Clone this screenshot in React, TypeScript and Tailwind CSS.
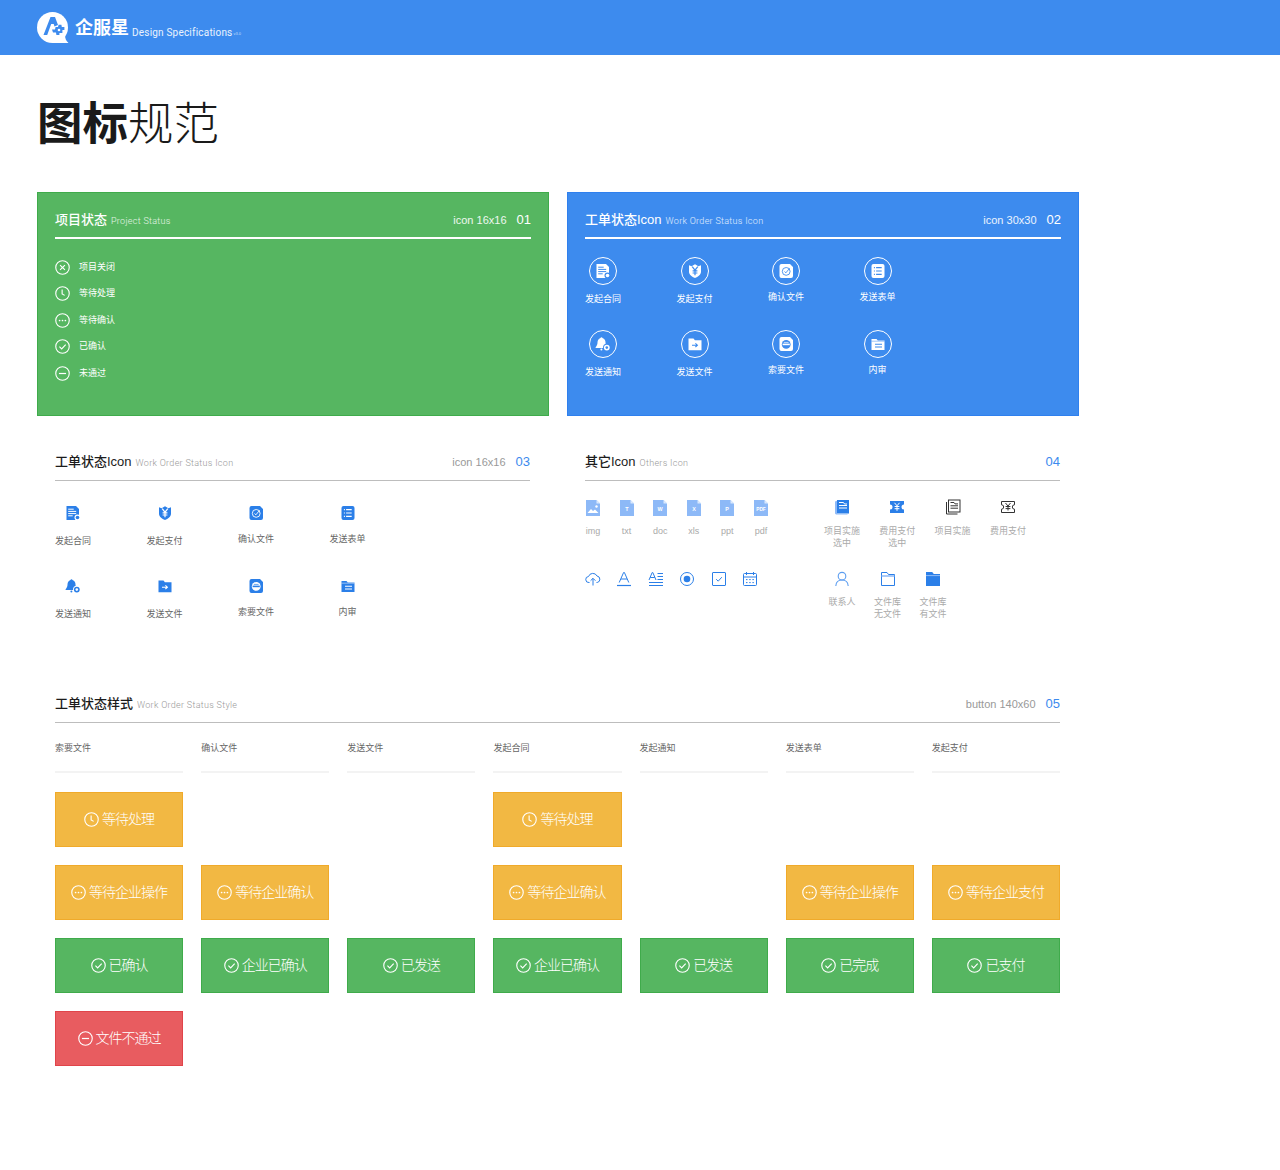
import type { ReactNode } from "react";

const BLUE = "#2b7fe8";
const FONT = "font-['Liberation_Sans','Noto_Sans_CJK_SC',sans-serif]";

type StatusKind = "close" | "clock" | "more" | "check" | "minus";

function StatusGlyph({ kind, className }: { kind: StatusKind; className: string }) {
  return (
    <svg viewBox="0 0 16 16" fill="none" stroke="currentColor" strokeWidth="1.2" className={`shrink-0 ${className}`}>
      <circle cx="8" cy="8" r="7.2" />
      {kind === "close" && <path d="M5.4 5.4l5.2 5.2M10.6 5.4l-5.2 5.2" />}
      {kind === "clock" && <path d="M7.6 3.8v4.6l2.7 1.6" />}
      {kind === "more" && (
        <g fill="currentColor" stroke="none">
          <circle cx="4.9" cy="8" r="0.9" />
          <circle cx="8" cy="8" r="0.9" />
          <circle cx="11.1" cy="8" r="0.9" />
        </g>
      )}
      {kind === "check" && <path d="M4.7 8.2l2.4 2.3 4.3-4.6" />}
      {kind === "minus" && <path d="M4.2 8h7.6" strokeWidth="1.3" />}
    </svg>
  );
}

type OrderKind = "contract" | "pay" | "confirm" | "form" | "notice" | "send" | "request" | "review";

function OrderGlyph({ kind, fg, bg, size = 16 }: { kind: OrderKind; fg: string; bg: string; size?: number }) {
  return (
    <svg viewBox="0 0 16 16" width={size} height={size}>
      {kind === "contract" && (
        <g>
          <path d="M1.5 1h9.500L14 4v11H1.500z" fill={fg} />
          <path d="M3.200 4.200h5.500M3.200 6.400h8M3.200 8.600h8M3.200 10.800h4.500" stroke={bg} strokeWidth="1" />
          <circle cx="12.500" cy="12.500" r="3" fill={bg} />
          <circle cx="12.500" cy="12.500" r="1.800" fill={fg} />
        </g>
      )}
      {kind === "pay" && (
        <g>
          <path d="M2 2.200l2.600 1 3.400-2 3.400 2 2.600-1v6.600c0 3-3 5.200-6 6.200-3-1-6-3.200-6-6.200z" fill={fg} />
          <path d="M5.200 3.600L8 7.200l2.800-3.600M8 7.200v5M5.600 7.800h4.800M5.600 10h4.800" stroke={bg} strokeWidth="1.200" fill="none" />
        </g>
      )}
      {kind === "confirm" && (
        <g>
          <path d="M3.500 1h8.500L15 4v9a2 2 0 0 1-2 2H3.500a2 2 0 0 1-2-2V3a2 2 0 0 1 2-2z" fill={fg} />
          <circle cx="8.200" cy="8.400" r="3.900" fill="none" stroke={bg} strokeWidth="0.900" />
          <path d="M6.500 8.500l1.400 1.300 3.600-4.400" stroke={bg} strokeWidth="0.900" fill="none" />
        </g>
      )}
      {kind === "form" && (
        <g>
          <rect x="1.500" y="1" width="13" height="14" rx="2" fill={fg} />
          <path d="M6.100 4.600h5.600M6.100 8h5.600M6.100 11.400h5.600M3.900 4.600h1M3.900 8h1M3.900 11.400h1" stroke={bg} strokeWidth="1.100" />
        </g>
      )}
      {kind === "notice" && (
        <g>
          <path d="M6.400 1.200c.6 0 1 .4 1.100.9 2 .6 3 2.300 3 4.400 0 2 .7 3.400 1.900 4.800v.7H.6v-.7c1.200-1.400 1.900-2.800 1.900-4.800 0-2.100 1-3.800 3-4.400.1-.5.400-.9.900-.9z" fill={fg} />
          <circle cx="6.400" cy="13.600" r="1" fill={fg} />
          <circle cx="11.800" cy="11.600" r="3.800" fill={bg} />
          <circle cx="11.800" cy="11.600" r="2.900" fill={fg} />
          <circle cx="11.800" cy="11.600" r="1.300" fill={bg} />
        </g>
      )}
      {kind === "send" && (
        <g>
          <path d="M1.500 2.500h5l1.400 1.700h6.600v10h-13z" fill={fg} />
          <path d="M5 9.200h5M8.400 7.400l2 1.800-2 1.800" stroke={bg} strokeWidth="1.100" fill="none" />
        </g>
      )}
      {kind === "request" && (
        <g>
          <path d="M3.500 1h8.500L15 4v9a2 2 0 0 1-2 2H3.500a2 2 0 0 1-2-2V3a2 2 0 0 1 2-2z" fill={fg} />
          <circle cx="8.200" cy="8.400" r="4.400" fill={bg} />
          <path d="M4.600 8.400h7.200" stroke={fg} strokeWidth="1.600" />
          <path d="M5.800 6.400h4.800" stroke={fg} strokeWidth="0.700" />
        </g>
      )}
      {kind === "review" && (
        <g>
          <path d="M1.500 3h5l1.300 1.500h6.700V14h-13z" fill={fg} />
          <path d="M1.500 5.200h13" stroke={bg} strokeWidth="0.500" />
          <path d="M5 8.200h7M5 11h7" stroke={bg} strokeWidth="1.100" />
        </g>
      )}
    </svg>
  );
}

const orderItems: { kind: OrderKind; label: string; low?: boolean }[] = [
  { kind: "contract", label: "发起合同", low: true },
  { kind: "pay", label: "发起支付", low: true },
  { kind: "confirm", label: "确认文件" },
  { kind: "form", label: "发送表单" },
  { kind: "notice", label: "发送通知", low: true },
  { kind: "send", label: "发送文件", low: true },
  { kind: "request", label: "索要文件" },
  { kind: "review", label: "内审" },
];

type HeadingProps = {
  title: string;
  sub: string;
  size?: string;
  no: string;
  light?: boolean;
  boxClass?: string;
};

function Heading({ title, sub, size, no, light, boxClass = "h-[29px] leading-[22px]" }: HeadingProps) {
  return (
    <div>
      <div className={`flex justify-between ${boxClass}`}>
        <div className="flex items-baseline">
          <span className={`text-[13px] font-medium ${light ? "text-white" : "text-[#1c1c1c]"}`}>{title}</span>
          <span className={`ml-1 font-['Roboto'] text-[9px] font-light tracking-[0.3px] ${light ? "text-white/85" : "text-[#999999]"}`}>{sub}</span>
        </div>
        <div className="flex items-baseline">
          {size && <span className={`text-[11px] ${light ? "text-white/90" : "text-[#999999]"}`}>{size}</span>}
          <span className={`ml-[10px] text-[13px] ${light ? "text-white" : "text-[#3c8aee]"}`}>{no}</span>
        </div>
      </div>
      {light ? (
        <div className="h-[2px] w-full bg-white" />
      ) : (
        <div className="h-px w-full bg-[#bdbdbd]" />
      )}
    </div>
  );
}

function ProjectCard() {
  const rows: { kind: StatusKind; label: string }[] = [
    { kind: "close", label: "项目关闭" },
    { kind: "clock", label: "等待处理" },
    { kind: "more", label: "等待确认" },
    { kind: "check", label: "已确认" },
    { kind: "minus", label: "未通过" },
  ];
  return (
    <div className="h-[224px] w-[512px] border border-[#3fab4b] bg-[#56b661] px-[17px] pt-[16px]">
      <Heading title="项目状态" sub="Project Status" size="icon 16x16" no="01" light boxClass="h-[28px] leading-[21px]" />
      <div className="mt-[15px] flex flex-col">
        {rows.map((r) => (
          <div key={r.label} className="flex h-[26.5px] items-center gap-[9px] text-[9px] text-white">
            <StatusGlyph kind={r.kind} className="h-[15px] w-[15px]" />
            {r.label}
          </div>
        ))}
      </div>
    </div>
  );
}

function WorkOrderCard() {
  return (
    <div className="h-[224px] w-[512px] border border-[#2f80ee] bg-[#3d8bee] px-[17px] pt-[16px]">
      <Heading title="工单状态Icon" sub="Work Order Status Icon" size="icon 30x30" no="02" light boxClass="h-[28px] leading-[21px]" />
      <div className="mt-[18px] grid w-[366px] grid-cols-4">
        {orderItems.map((it) => (
          <div key={it.label} className="flex h-[73px] w-[36px] flex-col items-center text-[9px] text-white">
            <div className="flex h-[28px] w-[28px] shrink-0 items-center justify-center rounded-full border border-white">
              <OrderGlyph kind={it.kind} fg="#ffffff" bg="#3d8bee" />
            </div>
            <span className={`whitespace-nowrap leading-[12px] ${it.low ? "mt-[8px]" : "mt-[6px]"}`}>{it.label}</span>
          </div>
        ))}
      </div>
    </div>
  );
}

function WorkOrderPlain() {
  return (
    <div className="w-[475px]">
      <Heading title="工单状态Icon" sub="Work Order Status Icon" size="icon 16x16" no="03" />
      <div className="mt-[24px] grid w-[366px] grid-cols-4">
        {orderItems.map((it) => (
          <div key={it.label} className="flex h-[73px] w-[36px] flex-col items-center text-[9px] text-[#666666]">
            <OrderGlyph kind={it.kind} fg={BLUE} bg="#ffffff" />
            <span className={`whitespace-nowrap leading-[12px] ${it.low ? "mt-[14px]" : "mt-[12px]"}`}>{it.label}</span>
          </div>
        ))}
      </div>
    </div>
  );
}

function FileGlyph({ label }: { label: string }) {
  return (
    <svg viewBox="0 0 16 18" width="16" height="18">
      <path d="M1 1h10.500L15 4.500V17H1z" fill="#8db9f7" />
      <path d="M11.500 1L15 4.500h-3.500z" fill="#dbe9fd" />
      {label === "img" ? (
        <g fill="#ffffff">
          <path d="M2.500 14l3.500-4 2 2 2-1.500 3.500 3.500z" />
          <circle cx="11.500" cy="7.500" r="1.200" />
        </g>
      ) : (
        <text
          x="8"
          y="11.600"
          textAnchor="middle"
          fill="#ffffff"
          fontWeight="700"
          fontSize={label === "PDF" ? "4.800" : "5.400"}
          fontFamily="Liberation Sans"
        >
          {label}
        </text>
      )}
    </svg>
  );
}

function Outline({ children, w = 16 }: { children: ReactNode; w?: number }) {
  return (
    <svg viewBox="0 0 16 16" width={w} height={16} fill="none" stroke={BLUE} strokeWidth="1">
      {children}
    </svg>
  );
}

const files = [
  { mark: "img", label: "img" },
  { mark: "T", label: "txt" },
  { mark: "W", label: "doc" },
  { mark: "X", label: "xls" },
  { mark: "P", label: "ppt" },
  { mark: "PDF", label: "pdf" },
];

function OthersSection() {
  return (
    <div className="w-[475px]">
      <Heading title="其它Icon" sub="Others Icon" no="04" />
      <div className="mt-[18px] flex">
        <div className="w-[239px]">
          <div className="flex h-[72px] gap-[17.6px]">
            {files.map((f) => (
              <div key={f.label} className="flex w-4 flex-col items-center text-[9px] leading-[12px] text-[#aaaaaa]">
                <FileGlyph label={f.mark} />
                <span className="mt-[8px]">{f.label}</span>
              </div>
            ))}
          </div>
          <div className="flex h-4 w-[173px] items-center justify-between">
            <Outline>
              <path d="M4.500 11.500H4a3 3 0 0 1-.5-6A4.600 4.600 0 0 1 12 5a3.300 3.300 0 0 1 .2 6.500h-.7" />
              <path d="M8 14.500V7.500M5.600 9.700L8 7.300l2.400 2.400" />
            </Outline>
            <Outline>
              <path d="M3.200 11.500L7.600 1.500h.8l4.400 10M5 8h6" />
              <path d="M1 14.500h14" strokeWidth="1.200" />
            </Outline>
            <Outline>
              <path d="M1 9L4.200 1.500h.6L8 9M2.200 6.500h4.600" />
              <path d="M9.500 2.500H15M9.500 5.500H15M9.500 8.500H15M1 11.500h14M1 14.500h14" />
            </Outline>
            <Outline>
              <circle cx="8" cy="8" r="6.500" />
              <circle cx="8" cy="8" r="3.300" fill={BLUE} stroke="none" />
            </Outline>
            <Outline>
              <rect x="1.500" y="1.500" width="13" height="13" rx="0.500" />
              <path d="M5.200 8.200l2 2 3.600-4" />
            </Outline>
            <Outline>
              <rect x="1.500" y="2.500" width="13" height="12" rx="1" />
              <path d="M1.500 6h13M4.500 1v3M11.500 1v3M4 8.600h1.500M7.200 8.600h1.500M10.400 8.600h1.500M4 11.600h1.500M7.200 11.600h1.500M10.400 11.600h1.500" />
            </Outline>
          </div>
        </div>
        <div className="text-center text-[9px] leading-[12px] text-[#aaaaaa]">
          <div className="flex h-[72px] gap-[19.3px]">
            <div className="w-9">
              <svg viewBox="0 0 16 16" width="16" height="16" className="mx-auto">
                <path d="M1 2.500L3 1.700V15h10.500v.5H2L1 14.500z" fill="#8db9f7" />
                <rect x="3" y="1" width="12" height="13.500" fill={BLUE} />
                <path d="M5 3.500h4.500l1 1.500h2.500M5 6.500h8M5 9h8" stroke="#ffffff" strokeWidth="1" fill="none" />
              </svg>
              <div className="mt-[10px]">项目实施<br />选中</div>
            </div>
            <div className="w-9">
              <svg viewBox="0 0 16 16" width="16" height="16" className="mx-auto">
                <path d="M1 2h14v3.500a2.500 2.500 0 0 0 0 5V14H1v-3.500a2.500 2.500 0 0 0 0-5z" fill={BLUE} />
                <path d="M5.500 3.800L8 6.800l2.500-3M8 6.800v5M5.600 7.500h4.800M5.600 9.700h4.800" stroke="#ffffff" strokeWidth="1" fill="none" />
              </svg>
              <div className="mt-[10px]">费用支付<br />选中</div>
            </div>
            <div className="w-9">
              <svg viewBox="0 0 16 16" width="16" height="16" fill="none" stroke="#333333" strokeWidth="1" className="mx-auto">
                <path d="M1.500 3v12h11" />
                <rect x="3.500" y="1" width="11.500" height="12" />
                <path d="M5.500 3.500h3.500l1 1.400h3M5.500 6.800h7.500M5.500 9.200h7.500" />
              </svg>
              <div className="mt-[10px]">项目实施</div>
            </div>
            <div className="w-9">
              <svg viewBox="0 0 16 16" width="16" height="16" fill="none" stroke="#333333" strokeWidth="1" className="mx-auto">
                <path d="M1.500 2.500h13v3.300a2.200 2.200 0 0 0 0 4.400v3.300h-13v-3.300a2.200 2.200 0 0 0 0-4.400z" />
                <path d="M5.500 4L8 7l2.500-3M8 7v4.500M5.600 7.500h4.800M5.600 9.600h4.800" />
              </svg>
              <div className="mt-[10px]">费用支付</div>
            </div>
          </div>
          <div className="flex gap-[9.500px]">
            <div className="w-9">
              <svg viewBox="0 0 16 16" width="16" height="16" fill="none" stroke="#5b9df0" strokeWidth="1.100" className="mx-auto">
                <circle cx="8" cy="5.200" r="3.800" />
                <path d="M1.800 15c.2-3.500 2.600-6 6.200-6s6 2.500 6.200 6" />
              </svg>
              <div className="mt-[9px]">联系人</div>
            </div>
            <div className="w-9">
              <svg viewBox="0 0 16 16" width="16" height="16" className="mx-auto" fill="none" stroke={BLUE} strokeWidth="1">
                <path d="M1.500 1.500h5.500l1.500 2h6v11h-13z" />
                <path d="M1.500 5h13" stroke="#8db9f7" strokeWidth="1.500" />
              </svg>
              <div className="mt-[9px]">文件库<br />无文件</div>
            </div>
            <div className="w-9">
              <svg viewBox="0 0 16 16" width="16" height="16" className="mx-auto">
                <path d="M1 1h6.200l1.600 2H15v12H1z" fill={BLUE} />
                <path d="M1 4.600h14" stroke="#a9cbf9" strokeWidth="0.800" />
              </svg>
              <div className="mt-[9px]">文件库<br />有文件</div>
            </div>
          </div>
        </div>
      </div>
    </div>
  );
}

type Tone = "wait" | "done" | "fail";

const toneClass: Record<Tone, string> = {
  wait: "bg-[#f2b843] border-[#f0aa2a]",
  done: "bg-[#56b661] border-[#3fab4b]",
  fail: "bg-[#e85c60] border-[#e0444a]",
};

function StatusButton({ tone, kind, text }: { tone: Tone; kind: StatusKind; text: string }) {
  return (
    <div className={`flex h-[55px] items-center justify-center gap-[3px] border text-[14px] font-light tracking-[-1px] text-white ${toneClass[tone]}`}>
      <StatusGlyph kind={kind} className="h-[15px] w-[15px]" />
      {text}
    </div>
  );
}

const columns = ["索要文件", "确认文件", "发送文件", "发起合同", "发起通知", "发送表单", "发起支付"];

const buttonRows: ({ tone: Tone; kind: StatusKind; text: string } | null)[][] = [
  [{ tone: "wait", kind: "clock", text: "等待处理" }, null, null, { tone: "wait", kind: "clock", text: "等待处理" }, null, null, null],
  [
    { tone: "wait", kind: "more", text: "等待企业操作" },
    { tone: "wait", kind: "more", text: "等待企业确认" },
    null,
    { tone: "wait", kind: "more", text: "等待企业确认" },
    null,
    { tone: "wait", kind: "more", text: "等待企业操作" },
    { tone: "wait", kind: "more", text: "等待企业支付" },
  ],
  [
    { tone: "done", kind: "check", text: "已确认" },
    { tone: "done", kind: "check", text: "企业已确认" },
    { tone: "done", kind: "check", text: "已发送" },
    { tone: "done", kind: "check", text: "企业已确认" },
    { tone: "done", kind: "check", text: "已发送" },
    { tone: "done", kind: "check", text: "已完成" },
    { tone: "done", kind: "check", text: "已支付" },
  ],
  [{ tone: "fail", kind: "minus", text: "文件不通过" }, null, null, null, null, null, null],
];

function StyleSection() {
  return (
    <div className="ml-[18px] w-[1005px]">
      <Heading title="工单状态样式" sub="Work Order Status Style" size="button 140x60" no="05" boxClass="h-[28px] leading-[20px]" />
      <div className="mt-[19px] grid grid-cols-7 gap-x-[18px]">
        {columns.map((c) => (
          <div key={c} className="h-[31px] border-b-2 border-[#f3f3f3] text-[9px] leading-[12px] text-[#666666]">
            {c}
          </div>
        ))}
      </div>
      <div className="mt-[19px] grid grid-cols-7 gap-x-[18px] gap-y-[18px]">
        {buttonRows.flat().map((b, i) =>
          b ? <StatusButton key={i} tone={b.tone} kind={b.kind} text={b.text} /> : <div key={i} />
        )}
      </div>
    </div>
  );
}

function Logo() {
  return (
    <svg viewBox="0 0 32 32" width="32" height="32">
      <circle cx="15.500" cy="15.500" r="15.500" fill="#ffffff" />
      <path d="M22 24l6-1c0 3 1 6 3.500 8H15z" fill="#ffffff" />
      <path d="M6.500 23L13.500 5h4.500l3 8-3.500 1.500-.8-2.500h-2.500l-4 11z" fill="#3d8bee" />
      <path d="M15 17.500h3l.6-2.500h2.400l.6-2.200h2.800l.4 2.200h2.600v3h-2v3h-3V23h-3l-.4-2.500h-3z" fill="#3d8bee" />
      <circle cx="22" cy="18" r="1.300" fill="#ffffff" />
    </svg>
  );
}

export default function App() {
  return (
    <div className={`min-h-[1170px] w-full bg-white ${FONT}`}>
      <header className="flex h-[55px] items-center bg-[#3d8bee] pl-[37px]">
        <Logo />
        <span className="ml-[6px] mt-[1px] text-[18px] font-bold leading-none text-white">企服星</span>
        <span className="ml-[3px] mt-[10px] font-['Roboto'] text-[10px] tracking-[0.2px] text-white/90">Design Specifications</span>
        <span className="mt-[13px] ml-px text-[4px] text-white/70">v3.0</span>
      </header>
      <main className="pl-[37px]">
        <h1 className="pt-[38px] text-[45.500px] leading-[64px] text-[#1a1a1a]">
          <span className="font-bold">图标</span>
          <span className="font-light">规范</span>
        </h1>
        <div className="mt-[35px] flex gap-[18px]">
          <ProjectCard />
          <WorkOrderCard />
        </div>
        <div className="mt-[35px] flex h-[243px] gap-[55px] pl-[18px]">
          <WorkOrderPlain />
          <OthersSection />
        </div>
        <StyleSection />
      </main>
    </div>
  );
}
